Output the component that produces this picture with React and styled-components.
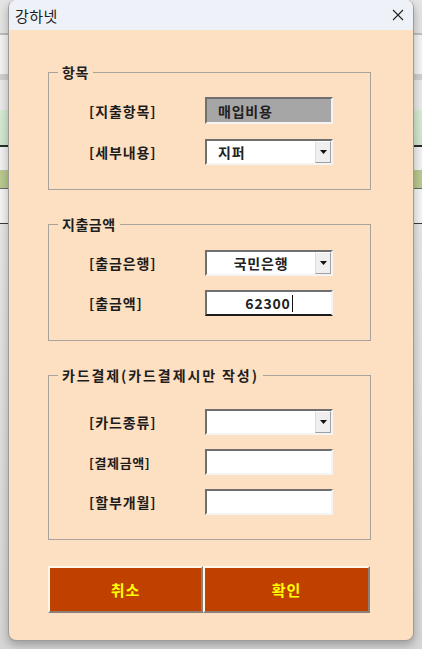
import React from 'react';
import styled, { createGlobalStyle } from 'styled-components';

const GlobalStyle = createGlobalStyle`
  html, body {
    margin: 0;
    padding: 0;
  }
  body {
    width: 422px;
    height: 649px;
    overflow: hidden;
    font-family: "Noto Sans CJK KR", "Noto Sans", sans-serif;
  }
`;

// the Excel sheet peeking out around the dialog
const Desktop = styled.div`
  width: 422px;
  height: 649px;
  padding: 0 8px;
  box-sizing: border-box;
  background:
    linear-gradient(
      to bottom,
      #e4e4e4 0px, #e4e4e4 33px,
      #bdbdbd 33px, #bdbdbd 35px,
      #f3f3f3 35px, #f3f3f3 74px,
      #cfcfcf 74px, #cfcfcf 80px,
      #e9e9e9 80px, #e9e9e9 110px,
      #d7ebd4 110px, #cfe6cc 145px,
      #2b2b2b 145px, #2b2b2b 147px,
      #f1f1f1 147px, #f1f1f1 170px,
      #b9c98f 170px, #b9c98f 188px,
      #6a6a6a 188px, #6a6a6a 189px,
      #f4f4f4 189px, #f4f4f4 223px,
      #3a3a3a 223px, #3a3a3a 224px,
      #e6e6e6 224px, #d6d6d6 649px
    );
`;

const Window = styled.div`
  width: 406px;
  height: 641px;
  background: #fddfc1;
  border: 1px solid #9c9c9c;
  border-top: none;
  border-radius: 8px;
  box-sizing: border-box;
  overflow: hidden;
  box-shadow: 0 4px 10px rgba(0, 0, 0, 0.28);
  display: flex;
  flex-direction: column;
`;

const TitleBar = styled.div`
  height: 30px;
  background: #eef2f8;
  display: flex;
  align-items: center;
  justify-content: space-between;
  padding: 0 9px 0 6px;
  flex-shrink: 0;
`;

const Title = styled.span`
  font-size: 15px;
  color: #1b1b1b;
  letter-spacing: 0.5px;
`;

const CloseIcon = () => (
  <svg width="12" height="12" viewBox="0 0 12 12">
    <path d="M1 1 L11 11 M11 1 L1 11" stroke="#222" strokeWidth="1.1" fill="none" />
  </svg>
);

const Body = styled.div`
  padding: 34px 0 0 39px;
  display: flex;
  flex-direction: column;
  gap: 26px;
`;

const Group = styled.fieldset`
  width: 323px;
  box-sizing: border-box;
  margin: 0;
  border: 1px solid #a7a29c;
  padding: ${p => p.$top}px 0 24px 0;
  display: grid;
  gap: ${p => p.$gap}px;
`;

const Legend = styled.legend`
  margin-left: 9px;
  padding: 0 4px;
  font-size: 14px;
  line-height: 16px;
  font-weight: bold;
  color: #1e1e1e;
  letter-spacing: ${p => p.$spacing || 0.5}px;
`;

const Row = styled.div`
  display: grid;
  grid-template-columns: 116px 128px;
  align-items: center;
  padding-left: 40px;
  height: ${p => p.$h || 26}px;
`;

const Label = styled.span`
  font-size: ${p => (p.$small ? 13 : 14)}px;
  font-weight: bold;
  color: #1c1c1c;
  letter-spacing: ${p => (p.$small ? 0.6 : 0.9)}px;
`;

const Field = styled.div`
  height: 100%;
  box-sizing: border-box;
  background: ${p => (p.$disabled ? '#a6a6a6' : '#ffffff')};
  border-top: 2px solid #6f6f6f;
  border-left: 2px solid #6f6f6f;
  border-right: 2px solid #f4f4f4;
  border-bottom: 2px solid ${p => (p.$focused ? '#1a1a1a' : '#f4f4f4')};
  display: flex;
  align-items: center;
  font-size: 14px;
  font-weight: bold;
  color: #222;
  letter-spacing: 0.8px;
`;

const FieldText = styled.span`
  flex: 1;
  text-align: ${p => (p.$center ? 'center' : 'left')};
  padding-left: ${p => (p.$center ? 0 : 11)}px;
`;

const Caret = styled.span`
  display: inline-block;
  width: 1px;
  height: 17px;
  background: #111;
  vertical-align: -3px;
  margin-left: 1px;
`;

const DropButton = styled.div`
  width: 16px;
  height: 100%;
  box-sizing: border-box;
  background: #efefef;
  border-left: 1px solid #dcdcdc;
  border-top: 1px solid #fff;
  border-bottom: 1px solid #a0a0a0;
  border-right: 1px solid #a0a0a0;
  display: flex;
  align-items: center;
  justify-content: center;
`;

const Arrow = () => (
  <svg width="7" height="4" viewBox="0 0 7 4">
    <path d="M0 0 H7 L3.5 4 Z" fill="#111" />
  </svg>
);

const ButtonRow = styled.div`
  display: flex;
  width: 322px;
  height: 47px;
`;

const ActionButton = styled.button`
  flex: ${p => p.$w};
  height: 100%;
  margin: 0;
  background: #c04000;
  border-top: 2px solid #fff6ea;
  border-left: 2px solid #fff6ea;
  border-right: 2px solid #8a8077;
  border-bottom: 2px solid #8a8077;
  color: #ffff00;
  font-family: "Noto Sans CJK KR", sans-serif;
  font-size: 15px;
  font-weight: bold;
  letter-spacing: 1px;
  padding: 0;
`;

const Combo = ({ text, center }) => (
  <Field>
    <FieldText $center={center}>{text}</FieldText>
    <DropButton><Arrow /></DropButton>
  </Field>
);

export default function App() {
  return (
    <>
      <GlobalStyle />
      <Desktop>
        <Window>
          <TitleBar>
            <Title>강하넷</Title>
            <CloseIcon />
          </TitleBar>
          <Body>
            <Group $top={17} $gap={15}>
              <Legend>항목</Legend>
              <Row $h={27}>
                <Label>[지출항목]</Label>
                <Field $disabled>
                  <FieldText>매입비용</FieldText>
                </Field>
              </Row>
              <Row>
                <Label>[세부내용]</Label>
                <Combo text="지퍼" />
              </Row>
            </Group>

            <Group $top={18} $gap={14}>
              <Legend>지출금액</Legend>
              <Row>
                <Label>[출금은행]</Label>
                <Combo text="국민은행" center />
              </Row>
              <Row>
                <Label>[출금액]</Label>
                <Field $focused>
                  <FieldText $center>62300<Caret /></FieldText>
                </Field>
              </Row>
            </Group>

            <Group $top={26} $gap={14}>
              <Legend $spacing={1.9}>카드결제(카드결제시만 작성)</Legend>
              <Row>
                <Label>[카드종류]</Label>
                <Combo text="" />
              </Row>
              <Row>
                <Label $small>[결제금액]</Label>
                <Field />
              </Row>
              <Row>
                <Label>[할부개월]</Label>
                <Field />
              </Row>
            </Group>

            <ButtonRow>
              <ActionButton $w={155}>취소</ActionButton>
              <ActionButton $w={167}>확인</ActionButton>
            </ButtonRow>
          </Body>
        </Window>
      </Desktop>
    </>
  );
}
